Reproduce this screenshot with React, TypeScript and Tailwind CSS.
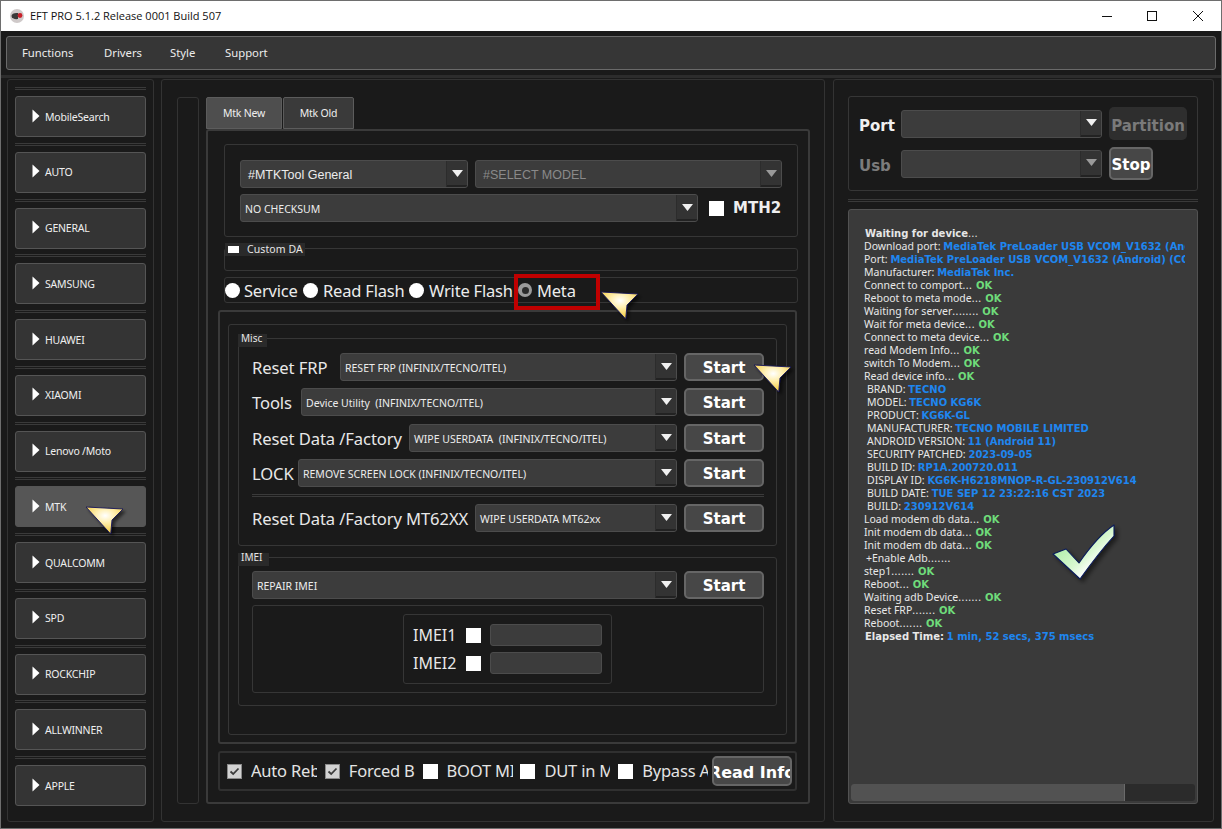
import React from "react";

const TAHOMA = "font-['Noto_Sans','Open_Sans',sans-serif]";
const HEAVY = "font-['DejaVu_Sans',sans-serif] font-bold";

function Cursor({ className, id }: { className: string; id: string }) {
  return (
    <svg className={`absolute ${className}`} width="44" height="36" viewBox="0 0 44 36">
      <defs>
        <radialGradient id={`g${id}`} cx="0.52" cy="0.32" r="0.6">
          <stop offset="0" stopColor="#ffffff" />
          <stop offset="0.4" stopColor="#fff0b4" />
          <stop offset="1" stopColor="#f4cf4c" />
        </radialGradient>
        <filter id={`s${id}`} x="-20%" y="-20%" width="150%" height="150%">
          <feDropShadow dx="2.5" dy="2.5" stdDeviation="1.6" floodColor="#000" floodOpacity="0.55" />
        </filter>
      </defs>
      <path d="M1 1 L38 3 L27 14 L25.7 28 Z" fill={`url(#g${id})`} stroke="#14145a" strokeWidth="0.9" strokeLinejoin="round" filter={`url(#s${id})`} />
    </svg>
  );
}

function Group({ className = "", children }: { className?: string; children?: React.ReactNode }) {
  return <div className={`relative rounded-[3px] border border-[#363636] ${className}`}>{children}</div>;
}

function Legend({ children, className = "" }: { children: React.ReactNode; className?: string }) {
  return (
    <div className={`absolute bg-[#2a2a2a] text-[10.5px] text-[#e6e6e6] h-[13px] ${className}`}>{children}</div>
  );
}

function Combo({ text, className = "", dim, big }: { text?: string; className?: string; dim?: boolean; big?: boolean }) {
  return (
    <div className={`flex items-center h-[28px] rounded-[3px] border border-[#4c4c4c] bg-[#3c3c3c] ${className}`}>
      <div
        className={`flex-1 truncate whitespace-pre ${big ? "pl-[7px] pt-[2px] text-[12.5px] font-['Liberation_Sans',sans-serif]" : "pl-[4px] pt-[3px] text-[10.5px]"} ${dim ? "text-[#8a8a8a]" : "text-[#ececec]"}`}
      >
        {text}
      </div>
      <div className="w-[21px] h-[26px] flex items-center justify-center bg-[#333333] border-l border-[#2c2c2c] border-b-2 border-b-[#222] rounded-r-[2px]">
        <svg width="11" height="7" viewBox="0 0 11 7">
          <path d="M0 0 H11 L5.5 7 Z" fill={dim ? "#9a9a9a" : "#f0f0f0"} />
        </svg>
      </div>
    </div>
  );
}

function StartBtn({ children = "Start", className = "w-[80px] h-[28px] text-[15px]" }: { children?: React.ReactNode; className?: string }) {
  return (
    <div className={`flex items-center justify-center rounded-[5px] border-2 border-[#666666] bg-[#474747] text-white pt-[3px] ${HEAVY} ${className}`}>
      {children}
    </div>
  );
}

function Box({ checked, className = "" }: { checked?: boolean; className?: string }) {
  return (
    <div className={`w-[15px] h-[15px] shrink-0 flex items-center justify-center ${checked ? "bg-[#d2d2d2] border border-[#8a8a8a]" : "bg-white"} ${className}`}>
      {checked && (
        <svg width="11" height="9" viewBox="0 0 11 9">
          <path d="M1.5 4.5 L4.2 7 L9.5 1.5" fill="none" stroke="#3c3c3c" strokeWidth="1.8" />
        </svg>
      )}
    </div>
  );
}

function Radio({ on }: { on?: boolean }) {
  return on ? (
    <div className="w-[14px] h-[14px] rounded-full bg-[#9a9a9a] flex items-center justify-center shrink-0">
      <div className="w-[7px] h-[7px] rounded-full bg-[#2b2b2b]" />
    </div>
  ) : (
    <div className="w-[15px] h-[15px] rounded-full bg-white shrink-0" />
  );
}

const SIDE = ["MobileSearch", "AUTO", "GENERAL", "SAMSUNG", "HUAWEI", "XIAOMI", "Lenovo /Moto", "MTK", "QUALCOMM", "SPD", "ROCKCHIP", "ALLWINNER", "APPLE"];

function Sidebar() {
  return (
    <div className="w-[147px] ml-[6px] rounded-[3px] border border-[#333] px-[7px] pt-[7px] flex flex-col">
      {SIDE.map((s) => (
        <div key={s} className="h-[55.75px] shrink-0">
          <div className="h-[3px] border-y border-[#3a3a3a]" />
          <div
            className={`mt-[6px] h-[41px] rounded-[3px] border border-[#555] flex items-center pl-[16px] text-[10.5px] text-[#efefef] tracking-[-0.2px] ${s === "MTK" ? "bg-[#565656]" : "bg-[#343434]"}`}
          >
            <svg width="8" height="14" viewBox="0 0 8 14" className="shrink-0 mr-[5px] -mt-[2px]">
              <path d="M0.5 0.5 L7.5 7 L0.5 13.5 Z" fill="#fff" />
            </svg>
            <span className="pt-[2px]">{s}</span>
          </div>
        </div>
      ))}
    </div>
  );
}

const ROWS: [string, string, string][] = [
  ["Reset FRP", "RESET FRP (INFINIX/TECNO/ITEL)", "w-[88px]"],
  ["Tools", "Device Utility  (INFINIX/TECNO/ITEL)", "w-[49px]"],
  ["Reset Data /Factory", "WIPE USERDATA  (INFINIX/TECNO/ITEL)", "w-[157px]"],
  ["LOCK", "REMOVE SCREEN LOCK (INFINIX/TECNO/ITEL)", "w-[46px]"],
];

function Row({ label, text, w, className = "" }: { label: string; text: string; w: string; className?: string }) {
  return (
    <div className={`flex items-center w-[512px] ${className}`}>
      <div className={`${w} shrink-0 pt-[2px] text-[16.6px] text-[#e8e8e8] whitespace-nowrap tracking-[-0.1px]`}>{label}</div>
      <Combo text={text} className="flex-1 min-w-0" />
      <StartBtn className="w-[80px] h-[28px] ml-[7px] shrink-0 text-[15px]" />
    </div>
  );
}

function Center() {
  const checks: [string, boolean][] = [
    ["Auto Reboot", true],
    ["Forced BROM", true],
    ["BOOT MI", false],
    ["DUT in META", false],
    ["Bypass Auth", false],
  ];
  return (
    <div className="w-[664px] ml-[7px] rounded-[3px] border border-[#333] pl-[15px] pt-[17px] flex">
      <div className="w-[22px] h-[707px] rounded-[3px] border border-[#333]" />
      <div className="ml-[7px] w-[604px] h-[707px] flex flex-col">
        <div className="flex h-[32px] shrink-0">
          <div className="w-[76px] pt-[2px] flex items-center justify-center bg-[#4e4e4e] border border-[#5c5c5c] text-[10.5px] tracking-[-0.2px] text-[#eee] rounded-t-[2px]">Mtk New</div>
          <div className="w-[71px] pt-[2px] ml-[1px] flex items-center justify-center bg-[#3a3a3a] border border-[#5c5c5c] text-[10.5px] tracking-[-0.2px] text-[#eee] rounded-t-[2px]">Mtk Old</div>
        </div>
        <div className="flex-1 border-2 border-[#3a3a3a] rounded-[3px] pl-[16px]">
          <Group className="w-[574px] h-[93px] mt-[13px] pl-[15px] pt-[15px]">
            <div className="flex">
              <Combo big text="#MTKTool General" className="w-[228px]" />
              <Combo big dim text="#SELECT MODEL" className="w-[307px] ml-[7px]" />
            </div>
            <div className="flex items-center mt-[6px]">
              <Combo text="NO CHECKSUM" className="w-[458px]" />
              <Box className="ml-[11px]" />
              <div className={`ml-[9px] text-[15px] text-[#eee] whitespace-nowrap ${HEAVY}`}>MTH2</div>
            </div>
          </Group>
          <Group className="w-[574px] h-[23px] mt-[11px]">
            <Legend className="left-0 -top-[6px] w-[80px] flex items-center tracking-[0.1px] leading-[13px]">
              <div className="w-[11px] h-[7px] bg-white ml-[3px] mr-[8px]" />
              Custom DA
            </Legend>
          </Group>
          <Group className="w-[574px] h-[26px] mt-[6px] flex items-center text-[16.5px] text-[#ececec] tracking-[-0.2px]">
            <div className="absolute left-[289px] -top-[4px] w-[86px] h-[36px] border-[4px] border-[#c00000]" />
            <div className="flex items-center gap-[5px] w-[78px] shrink-0 whitespace-nowrap">
              <Radio />
              <span className="ml-[-1px] pt-[2px]">Service</span>
            </div>
            <div className="flex items-center gap-[5px] w-[106px] shrink-0 whitespace-nowrap">
              <Radio />
              <span className="pt-[2px]">Read Flash</span>
            </div>
            <div className="flex items-center gap-[5px] w-[109px] shrink-0 whitespace-nowrap">
              <Radio />
              <span className="pt-[2px]">Write Flash</span>
            </div>
            <div className="flex items-center gap-[5px] shrink-0 whitespace-nowrap">
              <Radio on />
              <span className="pt-[2px]">Meta</span>
            </div>
          </Group>
          <div className="relative -ml-[6px] mt-[7px] w-[579px] h-[434px] border-2 border-[#3a3a3a] rounded-[3px] pl-[8px] pt-[12px]">
            <Group className="w-[559px] h-[411px] pl-[9px] pt-[13px]">
              <Group className="w-[539px] h-[208px] pl-[13px] pt-[14px]">
                <Legend className="-left-px -top-[5px] w-[29px] pl-[3px] text-[10px] leading-[9px]">Misc</Legend>
                {ROWS.map((r, i) => (
                  <Row key={r[0]} label={r[0]} text={r[1]} w={r[2]} className={i === 0 ? "" : i === 2 ? "mt-[8px]" : "mt-[7px]"} />
                ))}
                <div className="h-[3px] w-[512px] border-y border-[#3a3a3a] mt-[7px]" />
                <Row label="Reset Data /Factory MT62XX" text="WIPE USERDATA MT62xx" w="w-[223px]" className="mt-[7px]" />
              </Group>
              <Group className="w-[539px] h-[149px] mt-[11px] pl-[13px] pt-[13px]">
                <Legend className="-left-px -top-[5px] w-[31px] pl-[3px] text-[10px] leading-[9px]">IMEI</Legend>
                <div className="flex w-[512px]">
                  <Combo text="REPAIR IMEI" className="flex-1" />
                  <StartBtn className="w-[80px] h-[28px] ml-[7px] shrink-0 text-[15px]" />
                </div>
                <Group className="w-[512px] h-[88px] mt-[6px] flex items-center justify-center">
                  <Group className="w-[209px] h-[70px] pl-[9px] pt-[9px] -ml-[1px]">
                    {["IMEI1", "IMEI2"].map((l, i) => (
                      <div key={l} className={`flex items-center h-[22px] ${i ? "mt-[6px]" : ""}`}>
                        <div className="w-[53px] text-[16px] text-[#e8e8e8]">{l}</div>
                        <Box />
                        <div className="ml-[9px] w-[112px] h-[22px] rounded-[3px] border border-[#4c4c4c] bg-[#3c3c3c]" />
                      </div>
                    ))}
                  </Group>
                </Group>
              </Group>
            </Group>
          </div>
          <div className="-ml-[6px] mt-[7px] w-[579px] h-[40px] border-2 border-[#303030] rounded-[3px] flex items-center pl-[7px]">
            {checks.map(([t, c]) => (
              <div key={t} className="w-[97.8px] shrink-0 flex items-center">
                <Box checked={c} />
                <div className="ml-[9px] pt-[1px] w-[66px] overflow-hidden whitespace-nowrap text-[16.5px] text-[#e4e4e4] tracking-[-0.2px]">{t}</div>
              </div>
            ))}
            <StartBtn className="w-[80px] h-[30px] -ml-[4px] shrink-0 overflow-hidden whitespace-nowrap text-[16px]">Read Info</StartBtn>
          </div>
        </div>
      </div>
    </div>
  );
}

const K = `text-[#6fdc7a] text-[10px] ${HEAVY}`;
const B = `text-[#1e86f0] text-[10px] ${HEAVY}`;

function Dots({ t }: { t: string }) {
  const m = t.match(/^(.*?)(\.+)$/);
  if (!m) return <>{t}</>;
  return (
    <>
      {m[1]}
      <span className="tracking-[0.5px]">{m[2]}</span>
    </>
  );
}

function L({ t, ok, pad = "" }: { t: string; ok?: boolean; pad?: string }) {
  return (
    <div className={`h-[13px] whitespace-pre ${pad}`}>
      <Dots t={t} />
      {ok && <span className={K}> OK</span>}
    </div>
  );
}
function I({ t, v, pad = "pl-[3px]" }: { t: string; v: string; pad?: string }) {
  return (
    <div className={`h-[13px] whitespace-pre ${pad}`}>
      {t} <span className={B}>{v}</span>
    </div>
  );
}

function Right() {
  return (
    <div className="w-[381px] ml-[8px] rounded-[3px] border border-[#333] pl-[14px] pt-[16px]">
      <Group className="w-[350px] h-[95px] pl-[10px] pt-[10px]">
        <div className="flex items-center h-[33px]">
          <div className={`w-[42px] pt-[5px] text-[15px] text-[#f0f0f0] ${HEAVY}`}>Port</div>
          <Combo className="w-[201px] h-[27px]" />
          <div className={`ml-[7px] w-[78px] h-[33px] pt-[5px] rounded-[5px] bg-[#2e2e2e] flex items-center justify-center text-[#7a7a7a] text-[15px] overflow-hidden ${HEAVY}`}>Partition</div>
        </div>
        <div className="flex items-center h-[33px] mt-[7px]">
          <div className={`w-[42px] pt-[5px] text-[15px] text-[#7c7c7c] ${HEAVY}`}>Usb</div>
          <Combo dim className="w-[201px] h-[27px]" />
          <StartBtn className="ml-[7px] w-[44px] h-[33px] overflow-hidden text-[15px]">Stop</StartBtn>
        </div>
      </Group>
      <div className="w-[350px] h-[3px] mt-[8px] border-y border-[#3a3a3a]" />
      <div className="relative w-[350px] h-[595px] mt-[7px] rounded-[3px] border border-[#525252] bg-[#3a3a3a]">
        <div className="w-[336px] pl-[15px] pt-[17px] overflow-hidden text-[10.5px] leading-[13px] text-[#e8e8e8]">
          <div className={`h-[13px] pl-px text-[#e6e6e6] text-[10px] ${HEAVY}`}>
            Waiting for device<span className="font-normal">...</span>
          </div>
          <I t="Download port:" v="MediaTek PreLoader USB VCOM_V1632 (Android) (COM3)" pad="" />
          <I t="Port:" v="MediaTek PreLoader USB VCOM_V1632 (Android) (COM3)" pad="" />
          <I t="Manufacturer:" v="MediaTek Inc." pad="" />
          <L t="Connect to comport..." ok />
          <L t="Reboot to meta mode..." ok />
          <L t="Waiting for server........" ok />
          <L t="Wait for meta device..." ok />
          <L t="Connect to meta device..." ok />
          <L t="read Modem Info..." ok />
          <L t="switch To Modem..." ok />
          <L t="Read device info..." ok />
          <I t="BRAND:" v="TECNO" />
          <I t="MODEL:" v="TECNO KG6K" />
          <I t="PRODUCT:" v="KG6K-GL" />
          <I t="MANUFACTURER:" v="TECNO MOBILE LIMITED" />
          <I t="ANDROID VERSION:" v="11 (Android 11)" />
          <I t="SECURITY PATCHED:" v="2023-09-05" />
          <I t="BUILD ID:" v="RP1A.200720.011" />
          <I t="DISPLAY ID:" v="KG6K-H6218MNOP-R-GL-230912V614" />
          <I t="BUILD DATE:" v="TUE SEP 12 23:22:16 CST 2023" />
          <I t="BUILD:" v="230912V614" />
          <L t="Load modem db data..." ok />
          <L t="Init modem db data..." ok />
          <L t="Init modem db data..." ok />
          <L t="+Enable Adb......." pad="pl-[2px]" />
          <L t="step1......." ok />
          <L t="Reboot..." ok />
          <L t="Waiting adb Device......." ok />
          <L t="Reset FRP......." ok />
          <L t="Reboot......." ok />
          <div className="h-[13px] whitespace-pre pl-px">
            <span className={`text-[10px] ${HEAVY}`}>Elapsed Time:</span> <span className={B}>1 min, 52 secs, 375 msecs</span>
          </div>
        </div>
        <svg className="absolute left-[203px] top-[313px]" width="70" height="62" viewBox="0 0 70 62">
          <defs>
            <linearGradient id="ck" x1="0" y1="0" x2="1" y2="1">
              <stop offset="0" stopColor="#8fe58a" />
              <stop offset="0.55" stopColor="#d8f8d0" />
              <stop offset="0.72" stopColor="#ffffff" />
              <stop offset="1" stopColor="#8fe58a" />
            </linearGradient>
            <filter id="ks" x="-20%" y="-20%" width="150%" height="150%">
              <feDropShadow dx="3" dy="3" stdDeviation="2" floodColor="#000" floodOpacity="0.5" />
            </filter>
          </defs>
          <path d="M1 31 L14 26 L27 40 C38 24 50 10 62 2 L62 13 C50 26 38 42 28 56 Z" fill="url(#ck)" stroke="#0b1b5a" strokeWidth="1.1" strokeLinejoin="round" filter="url(#ks)" />
        </svg>
        <div className="absolute left-[2px] bottom-[2px] w-[344px] h-[17px] rounded-[3px] bg-[#2b2b2b]">
          <div className="w-[274px] h-full rounded-l-[3px] bg-[#525252] border-r border-[#6a6a6a]" />
        </div>
      </div>
    </div>
  );
}

export default function App() {
  return (
    <div className={`relative w-[1222px] h-[829px] overflow-hidden box-border border border-[#6e6e6e] bg-[#1a1a1a] ${TAHOMA}`}>
      <div className="h-[30px] bg-white flex items-center text-[#111] font-['Open_Sans',sans-serif]">
        <svg width="16" height="16" viewBox="0 0 16 16" className="ml-[8px]">
          <circle cx="8" cy="8" r="7" fill="#cfc9c9" />
          <path d="M2.5 8 C2.5 5.5 6 4.5 9 5 L9 11 C6 11.5 2.5 10.5 2.5 8 Z" fill="#3a3a3a" />
          <circle cx="11" cy="7.5" r="2.4" fill="#c8202a" />
        </svg>
        <div className="ml-[5px] text-[11px] whitespace-nowrap">EFT PRO 5.1.2 Release 0001 Build 507</div>
        <div className="ml-auto flex items-center text-[#111]">
          <svg width="105" height="14" viewBox="0 0 105 14" className="mr-[14px]">
            <path d="M0 7.5 H10" stroke="#111" strokeWidth="1" />
            <rect x="45.5" y="2.5" width="9" height="9" fill="none" stroke="#111" strokeWidth="1" />
            <path d="M91 2 L101 12 M101 2 L91 12" stroke="#111" strokeWidth="1" />
          </svg>
        </div>
      </div>
      <div className="ml-[5px] mt-[5px] w-[1210px] h-[34px] rounded-[3px] border border-[#6a6a6a] bg-[#363636] flex items-center text-[11.3px] text-[#ececec]">
        <span className="ml-[15px] w-[82px]">Functions</span>
        <span className="w-[66px]">Drivers</span>
        <span className="w-[55px]">Style</span>
        <span>Support</span>
      </div>
      <div className="h-[3px] mt-[5px] bg-[#2c2c2c]" />
      <div className="flex h-[743px] mt-[1px]">
        <Sidebar />
        <Center />
        <Right />
      </div>
      <Cursor id="a" className="left-[84px] top-[505px]" />
      <Cursor id="b" className="left-[599px] top-[290px]" />
      <Cursor id="c" className="left-[752px] top-[363px]" />
    </div>
  );
}
